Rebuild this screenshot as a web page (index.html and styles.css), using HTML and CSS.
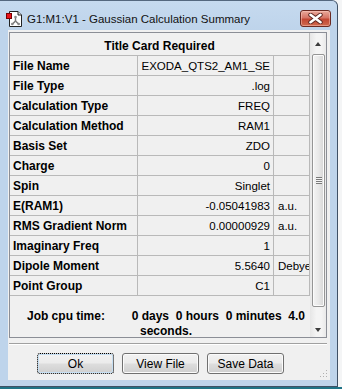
FILE: index.html
```html
<!DOCTYPE html>
<html lang="en">
<head>
    <meta charset="UTF-8">
    <title>Gaussian Calculation Summary</title>
    <link rel="stylesheet" href="styles.css">
</head>
<body>
    <div class="window">
        <div class="titlebar">
            <svg class="app-icon" width="16" height="16" viewBox="0 0 16 16">
                <path d="M3.5 0.5 H12 L15.5 4 V15.5 H3.5 Z" fill="#fff" stroke="#222"/>
                <path d="M12 0.5 V4 H15.5" fill="#ddd" stroke="#222"/>
                <line x1="9.5" y1="6.5" x2="9.5" y2="10" stroke="#777" stroke-width="1.4"/>
                <line x1="9.5" y1="10" x2="6.5" y2="13" stroke="#777" stroke-width="1.4"/>
                <line x1="9.5" y1="10" x2="12.5" y2="13" stroke="#777" stroke-width="1.4"/>
                <circle cx="9.5" cy="6" r="1.3" fill="#888"/>
                <circle cx="6.3" cy="13" r="1.3" fill="#888"/>
                <circle cx="12.7" cy="13" r="1.3" fill="#888"/>
                <rect x="0.5" y="2.5" width="5" height="5" fill="#e8121b" stroke="#7a0000"/>
            </svg>
            <span class="title">G1:M1:V1 - Gaussian Calculation Summary</span>
            <div class="close">
                <svg width="15" height="11" viewBox="0 0 15 11">
                    <path d="M2.5 1.8 L12.5 9.2 M12.5 1.8 L2.5 9.2" stroke="#5a2520" stroke-width="4.4" stroke-linecap="round"/>
                    <path d="M2.5 1.8 L12.5 9.2 M12.5 1.8 L2.5 9.2" stroke="#fff" stroke-width="2.6" stroke-linecap="round"/>
                </svg>
            </div>
        </div>

        <div class="client">
            <div class="grid-frame">
                <div class="grid">
                    <div class="summary">
                        <div class="cell head">Title Card Required</div>

                        <div class="cell label">File Name</div>
                        <div class="cell value">EXODA_QTS2_AM1_SE</div>
                        <div class="cell unit"></div>

                        <div class="cell label">File Type</div>
                        <div class="cell value">.log</div>
                        <div class="cell unit"></div>

                        <div class="cell label">Calculation Type</div>
                        <div class="cell value">FREQ</div>
                        <div class="cell unit"></div>

                        <div class="cell label">Calculation Method</div>
                        <div class="cell value">RAM1</div>
                        <div class="cell unit"></div>

                        <div class="cell label">Basis Set</div>
                        <div class="cell value">ZDO</div>
                        <div class="cell unit"></div>

                        <div class="cell label">Charge</div>
                        <div class="cell value">0</div>
                        <div class="cell unit"></div>

                        <div class="cell label">Spin</div>
                        <div class="cell value">Singlet</div>
                        <div class="cell unit"></div>

                        <div class="cell label">E(RAM1)</div>
                        <div class="cell value">-0.05041983</div>
                        <div class="cell unit">a.u.</div>

                        <div class="cell label">RMS Gradient Norm</div>
                        <div class="cell value">0.00000929</div>
                        <div class="cell unit">a.u.</div>

                        <div class="cell label">Imaginary Freq</div>
                        <div class="cell value">1</div>
                        <div class="cell unit"></div>

                        <div class="cell label">Dipole Moment</div>
                        <div class="cell value">5.5640</div>
                        <div class="cell unit">Debye</div>

                        <div class="cell label">Point Group</div>
                        <div class="cell value">C1</div>
                        <div class="cell unit"></div>
                    </div>
                    <div class="cpu">Job cpu time:        0 days  0 hours  0 minutes  4.0
seconds.</div>
                </div>

                <div class="vscroll">
                    <div class="arrow up"></div>
                    <div class="thumb"><span class="gripper"></span></div>
                    <div class="arrow down"></div>
                </div>
            </div>

            <div class="separator"></div>

            <div class="buttons">
                <button class="btn default">Ok</button>
                <button class="btn">View File</button>
                <button class="btn">Save Data</button>
            </div>

            <svg class="size-grip" width="10" height="10" viewBox="0 0 10 10">
                <rect x="8" y="2" width="1" height="1" fill="#b0b0b0"/>
                <rect x="5" y="5" width="1" height="1" fill="#b0b0b0"/>
                <rect x="8" y="5" width="1" height="1" fill="#b0b0b0"/>
                <rect x="2" y="8" width="1" height="1" fill="#b0b0b0"/>
                <rect x="5" y="8" width="1" height="1" fill="#b0b0b0"/>
                <rect x="8" y="8" width="1" height="1" fill="#b0b0b0"/>
            </svg>
        </div>
    </div>
</body>
</html>
```

FILE: styles.css
```css
body {
    margin: 0;
    height: 389px;
    overflow: hidden;
    background: linear-gradient(to bottom, #f4f5f6 387px, #1f7386 387px);
    font-family: "Liberation Sans", Arial, sans-serif;
}
.window {
    box-sizing: border-box;
    width: 338px;
    height: 387px;
    background: #bed4eb;
    border-top: 1px solid #55687f;
    border-right: 1px solid #3f5166;
    border-bottom: 1px solid #3f5166;
    border-radius: 0 6px 0 0;
    padding: 0 8px;
    display: flex;
    flex-direction: column;
}
.titlebar {
    height: 29px;
    margin: 0 -8px;
    padding: 6px 6px 0 6px;
    box-sizing: border-box;
    display: flex;
    align-items: center;
    background: linear-gradient(to bottom, #c6daef, #bed4eb);
    border-radius: 0 6px 0 0;
}
.app-icon {
    flex: none;
}
.title {
    margin-left: 5px;
    font-size: 11.5px;
    color: #111;
}
.close {
    margin-left: auto;
    width: 31px;
    height: 17px;
    box-sizing: border-box;
    border: 1px solid #6b2a22;
    border-radius: 3px;
    background: linear-gradient(to bottom, #e9a99b 0%, #d67566 45%, #c24733 55%, #cf6a4f 100%);
    box-shadow: inset 0 0 0 1px rgba(255, 210, 200, 0.45);
    display: flex;
    align-items: center;
    justify-content: center;
}
.client {
    position: relative;
    height: 350px;
    margin-right: -1px;
    background: #f0f0f0;
    padding: 2px 0 0 1px;
    box-sizing: border-box;
}
.grid-frame {
    width: 318px;
    height: 306px;
    box-sizing: border-box;
    border: 1px solid #8b8e96;
    display: flex;
}
.grid {
    width: 300px;
    display: flex;
    flex-direction: column;
}
.summary {
    display: grid;
    grid-template-columns: 128px 136px 36px;
    grid-template-rows: 23px;
    grid-auto-rows: 20px;
}
.cell {
    box-sizing: border-box;
    border-right: 1px solid #b9b9b9;
    border-bottom: 1px solid #b9b9b9;
    font-size: 12px;
    line-height: 20px;
    color: #000;
    white-space: nowrap;
    overflow: hidden;
}
.head {
    grid-column: 1 / 4;
    line-height: 26px;
    text-align: center;
    font-weight: bold;
}
.label {
    padding-left: 3px;
    font-weight: bold;
}
.value {
    text-align: right;
    padding-right: 3px;
    font-size: 11.5px;
}
.unit {
    padding-left: 4px;
    font-size: 11.5px;
}
.cpu {
    height: 41px;
    box-sizing: border-box;
    padding: 13px 0 0 12px;
    overflow: hidden;
    white-space: pre;
    text-align: center;
    font-size: 12px;
    font-weight: bold;
    line-height: 15px;
}
.vscroll {
    width: 16px;
    display: flex;
    flex-direction: column;
    background: linear-gradient(to right, #e6e6e6, #f4f4f4 40%, #f4f4f4 70%, #e9e9e9);
}
.arrow {
    height: 17px;
    flex: none;
    position: relative;
}
.arrow::after {
    content: "";
    position: absolute;
    left: 5px;
    width: 0;
    height: 0;
    border-left: 3.5px solid transparent;
    border-right: 3.5px solid transparent;
}
.up::after {
    top: 9px;
    border-bottom: 4px solid #3c3c3c;
}
.down::after {
    top: 8px;
    border-top: 4px solid #3c3c3c;
}
.thumb {
    height: 253px;
    margin: 4px 1px 0 2px;
    box-sizing: border-box;
    border: 1px solid #959595;
    border-radius: 2px;
    background: linear-gradient(to right, #f4f4f4, #e8e8e8 50%, #d6d6d6);
    box-shadow: inset 0 0 0 1px #fbfbfb;
    display: flex;
    align-items: center;
    justify-content: center;
}
.gripper {
    width: 6px;
    height: 7px;
    background: repeating-linear-gradient(to bottom, #7a7a7a 0 1px, #f4f4f4 1px 2px);
}
.vscroll .down {
    margin-top: auto;
}
.separator {
    width: 318px;
    height: 2px;
    margin-top: 5px;
    border-top: 1px solid #a0a0a0;
    border-bottom: 1px solid #ffffff;
    box-sizing: border-box;
}
.buttons {
    display: flex;
    gap: 8px;
    margin-top: 8px;
    padding-left: 28px;
}
.btn {
    width: 77px;
    height: 21px;
    box-sizing: border-box;
    padding: 0;
    border: 1px solid #707070;
    border-radius: 3px;
    background: linear-gradient(to bottom, #f2f2f2 0%, #ebebeb 48%, #dddddd 52%, #cfcfcf 100%);
    box-shadow: inset 0 0 0 1px #fbfbfb;
    font-family: "Liberation Sans", Arial, sans-serif;
    font-size: 12px;
    color: #000;
}
.btn.default {
    border: 1px dotted #000;
    box-shadow: inset 0 0 0 1px #c6dff3;
}
.size-grip {
    position: absolute;
    right: 2px;
    bottom: 2px;
}
```
